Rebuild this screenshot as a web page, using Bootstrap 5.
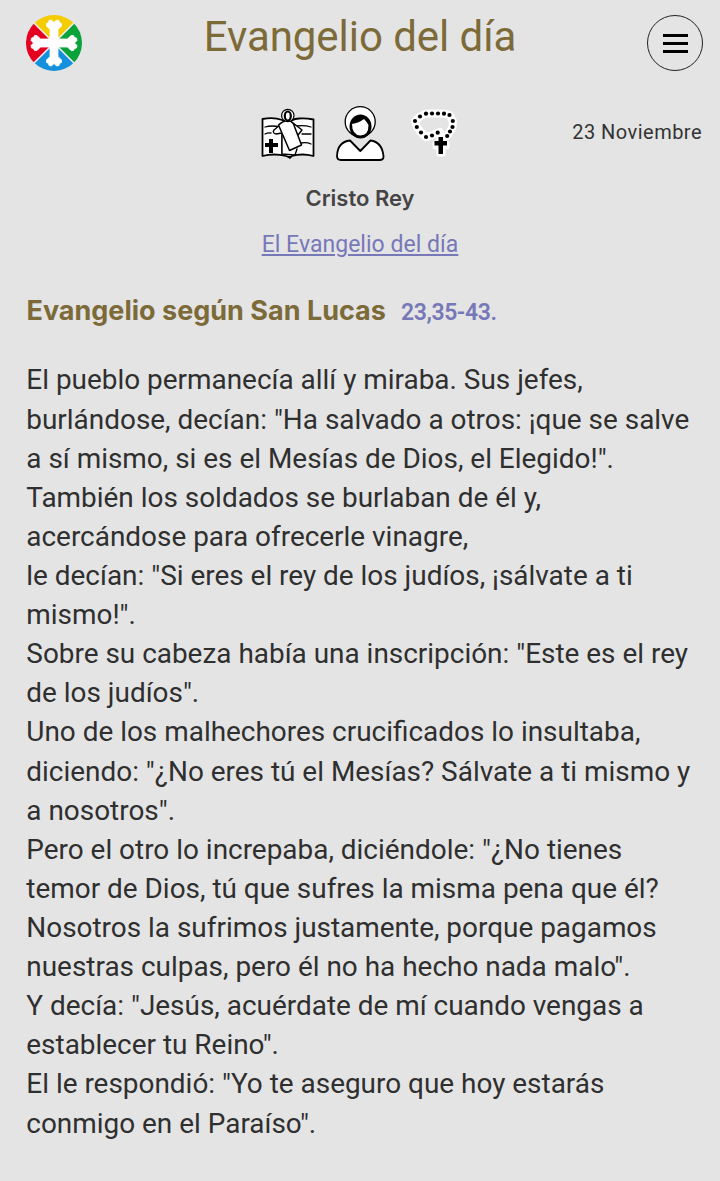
<!DOCTYPE html>
<html lang="es">
<head>
<meta charset="utf-8">
<meta name="viewport" content="width=device-width, initial-scale=1">
<title>Evangelio del día</title>
<link href="https://cdn.jsdelivr.net/npm/bootstrap@5.3.0/dist/css/bootstrap.min.css" rel="stylesheet">
<style>
body{background:#e4e4e4;color:#2f2f2f;font-family:Roboto,"Liberation Sans",sans-serif}
.topbar{padding:15px 17px 0 26px}
.side{width:56px;flex:none}
.app-title{font-size:42px;line-height:50px;color:#7c6a38;font-weight:400;letter-spacing:-.05px;height:62px;margin:-3px 9px 0 0}
.menu-btn{width:56px;height:56px;border:1.4px solid #222;border-radius:50%;background:none;gap:5px}
.menu-btn i{display:block;width:25px;height:3px;background:#000}
.tools{display:grid;grid-template-columns:1fr 216px 1fr;height:62px;margin:26px 18px 0}
.tools svg{margin-left:-2px}
.date{font-size:20px;line-height:24px;letter-spacing:.47px;color:#333;padding-top:20px}
.feast{font-family:Inter,sans-serif;font-weight:600;font-size:22px;line-height:28px;color:#444;margin-top:22px}
.daily-row{margin-top:19px}
.daily{font-size:23px;line-height:28px;letter-spacing:.03px;color:#7678b8;text-underline-offset:2px;text-decoration-thickness:2px}
.cite-row{margin:34px 26px 0 26.5px;gap:15px}
.cite{font-family:Inter,sans-serif;font-weight:700;font-size:27px;line-height:36px;color:#7c6a38}
.verse{font-size:23px;font-weight:600;line-height:36px;letter-spacing:-.4px;color:#7678b8;padding-top:2px}
.reading{font-size:27.93px;line-height:39.11px;margin:29.44px 0 0 26.3px}
</style>
</head>
<body>
<header class="topbar d-flex justify-content-between">
  <a class="side" href="#" aria-label="Inicio"><svg class="d-block" width="56" height="56" viewBox="-28 -28 56 56">
    <path fill="#f5cc00" d="M0 0-19.8-19.8A28 28 0 0 1 19.8-19.8Z"/><path fill="#09a23b" d="M0 0 19.8-19.8A28 28 0 0 1 19.8 19.8Z"/>
    <path fill="#1590dc" d="M0 0 19.8 19.8A28 28 0 0 1-19.8 19.8Z"/><path fill="#e50020" d="M0 0-19.8 19.8A28 28 0 0 1-19.8-19.8Z"/>
    <path stroke="#eee" stroke-width="1.6" d="M-20-20 20 20M20-20-20 20"/>
    <g fill="#fff"><path id="arm" d="M-4 2V-13.500L-7.500-17-7.500-19.500-5.500-20.500-5-22.500-2.500-23 0-20.500 2.500-23 5-22.500 5.500-20.500 7.500-19.500 7.500-17 4-13.500V2Z" stroke="#fff" stroke-width=".8" stroke-linejoin="round"/><use href="#arm" transform="rotate(90)"/><use href="#arm" transform="rotate(180)"/><use href="#arm" transform="rotate(270)"/></g>
  </svg></a>
  <h1 class="app-title text-center">Evangelio del día</h1>
  <button class="menu-btn side p-0 d-flex flex-column align-items-center justify-content-center" aria-label="Menú"><i></i><i></i><i></i></button>
</header>
<div class="tools">
  <span></span>
  <svg width="216" height="64" viewBox="250 100 216 64" fill="none" stroke="#000" stroke-linecap="round" stroke-linejoin="round">
    <g stroke-width="1.8">
      <path fill="#fff" d="M262.5 119Q274 117 282 120Q287 122 288 124Q291 119 299 118.500Q306 118 313.500 119.500V156Q302 153 292 156L290 157.500L286 156Q274 153 262.500 156Z"/>
      <path stroke-width="1.3" d="M265 127Q272 125 280 127M265 134Q268 132.500 271 133M297 126Q304 125 311 127M302 134 311 134M301 143Q307 142 311 144M282 130V155"/>
      <path fill="#fff" stroke-width="1.4" d="M281 124 274 130Q272 133 276 134L282 133M293 123 302 130 298 135 294 134M282 133V154L295 155 297 149"/>
      <path fill="#fff" stroke-width="1.5" d="M278.500 125Q283 121 287 120.500Q292 121 293.500 124L301.500 145 289.500 150.500Z"/>
      <circle cx="287.800" cy="115.500" r="6.200" fill="#fff" stroke-width="1.200"/><ellipse cx="287.800" cy="116" rx="3" ry="4.500" fill="#fff" stroke-width="2.200"/>
      <path stroke="none" fill="#000" d="M269 139h4v4h5v4h-5v6h-4v-6h-4v-4h4zM286 156h6l-2 3z"/>
    </g>
    <g stroke-width="1.8">
      <circle cx="360.200" cy="121.700" r="15" fill="#fff" stroke-width="1.300"/>
      <ellipse cx="360.500" cy="126.500" rx="11" ry="12" fill="#000" stroke="none"/>
      <path stroke="none" fill="#fff" d="M352 124Q359 123 364 119Q367 122 368.500 125Q368.500 135.500 360.500 135.500Q352 135 352 124Z"/>
      <path fill="#fff" d="M350 140.500Q337.500 142 337 156Q337 160 341 160H379.500Q384 160 383.500 156Q382 142 370.500 140.500L360.300 151Z"/>
    </g>
    <g><path stroke="#fff" stroke-width="8" d="M440 132 437.700 132.700 432 135.500 426 137 421 132.500 416.800 127 415 121 420 116.500 426 113.700 432 113.500 438 113.500 444 113.700 449.500 115 452.800 121 452.500 127 450 131.500 447 136 441 139"/>
      <path stroke="#fff" stroke-width="5" d="M439 139h4v4h4v4h-4v7h-4v-7h-4v-4h4z"/>
      <g fill="#000" stroke="none"><circle cx="415" cy="121" r="2.100"/><circle cx="420" cy="116.500" r="2.100"/><circle cx="426" cy="113.700" r="2.100"/><circle cx="432" cy="113.500" r="2.100"/><circle cx="438" cy="113.500" r="2.100"/><circle cx="444" cy="113.700" r="2.100"/><circle cx="449.500" cy="115" r="2.100"/><circle cx="452.800" cy="121" r="2.100"/><circle cx="452.500" cy="127" r="2.100"/><circle cx="450" cy="131.500" r="2.100"/><circle cx="447.200" cy="136" r="2.100"/><circle cx="437.700" cy="132.700" r="2.100"/><circle cx="432" cy="135.500" r="2.100"/><circle cx="426" cy="137" r="2.100"/><circle cx="421" cy="132.500" r="2.100"/><circle cx="416.800" cy="127" r="2.100"/>
      <path d="M438.500 137h4.500v4h4v4.500h-4v8.500h-4.500v-8.500h-4v-4.500h4z"/></g></g>
  </svg>
  <div class="date text-end">23 Noviembre</div>
</div>
<main>
  <div class="feast text-center">Cristo Rey</div>
  <div class="daily-row text-center"><a class="daily d-inline-block" href="#">El Evangelio del día</a></div>
  <div class="cite-row d-flex"><h2 class="cite mb-0">Evangelio según San Lucas</h2><span class="verse">23,35-43.</span></div>
  <p class="reading text-nowrap">El pueblo permanecía allí y miraba. Sus jefes,<br>burlándose, decían: "Ha salvado a otros: ¡que se salve<br>a sí mismo, si es el Mesías de Dios, el Elegido!".<br>También los soldados se burlaban de él y,<br>acercándose para ofrecerle vinagre,<br>le decían: "Si eres el rey de los judíos, ¡sálvate a ti<br>mismo!".<br>Sobre su cabeza había una inscripción: "Este es el rey<br>de los judíos".<br>Uno de los malhechores crucificados lo insultaba,<br>diciendo: "¿No eres tú el Mesías? Sálvate a ti mismo y<br>a nosotros".<br>Pero el otro lo increpaba, diciéndole: "¿No tienes<br>temor de Dios, tú que sufres la misma pena que él?<br>Nosotros la sufrimos justamente, porque pagamos<br>nuestras culpas, pero él no ha hecho nada malo".<br>Y decía: "Jesús, acuérdate de mí cuando vengas a<br>establecer tu Reino".<br>El le respondió: "Yo te aseguro que hoy estarás<br>conmigo en el Paraíso".</p>
</main>
<script src="https://cdn.jsdelivr.net/npm/bootstrap@5.3.0/dist/js/bootstrap.bundle.min.js"></script>
</body>
</html>
